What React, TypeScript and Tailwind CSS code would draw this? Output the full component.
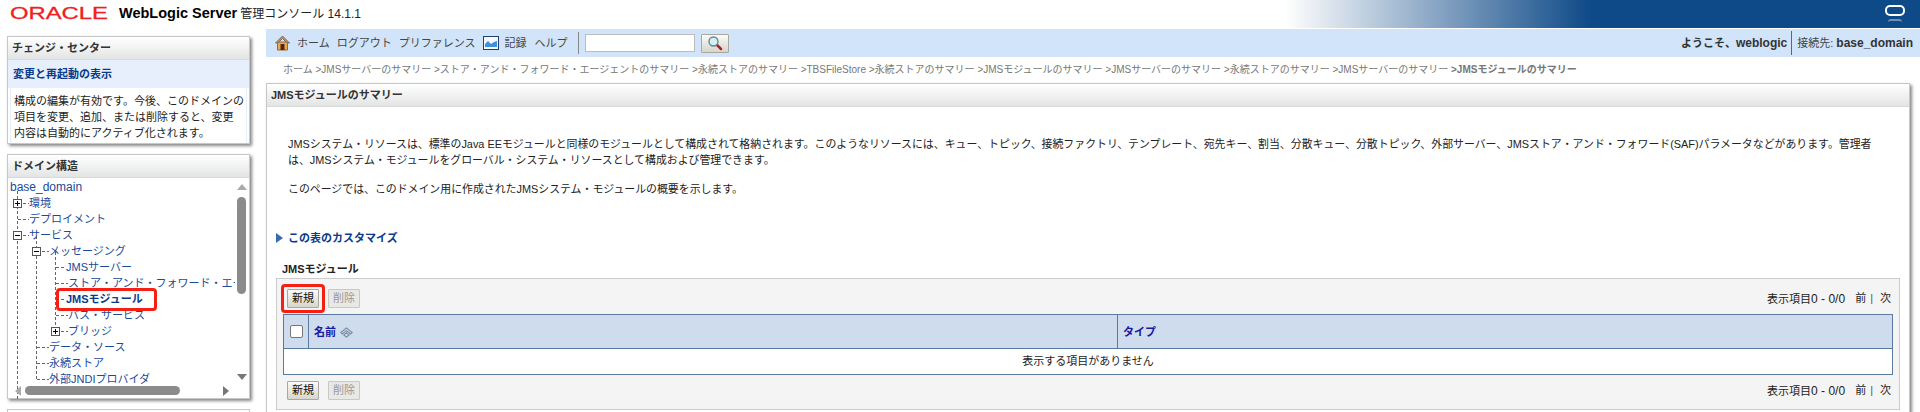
/* eslint-disable */
const FONT = "font-['Liberation_Sans','Noto_Sans_CJK_JP',sans-serif]";

const TREE = [
  { label: "base_domain", left: 2, big: true },
  { label: "環境", left: 21 },
  { label: "デプロイメント", left: 21 },
  { label: "サービス", left: 21 },
  { label: "メッセージング", left: 41 },
  { label: "JMSサーバー", left: 58 },
  { label: "ストア・アンド・フォワード・エージェント", left: 60 },
  { label: "JMSモジュール", left: 58, bold: true },
  { label: "バス・サービス", left: 60 },
  { label: "ブリッジ", left: 60 },
  { label: "データ・ソース", left: 41 },
  { label: "永続ストア", left: 41 },
  { label: "外部JNDIプロバイダ", left: 41 },
];

const CRUMBS = [
  "ホーム",
  "JMSサーバーのサマリー",
  "ストア・アンド・フォワード・エージェントのサマリー",
  "永続ストアのサマリー",
  "TBSFileStore",
  "永続ストアのサマリー",
  "JMSモジュールのサマリー",
  "JMSサーバーのサマリー",
  "永続ストアのサマリー",
  "JMSサーバーのサマリー",
];

function PanelHeader({ children }: { children: React.ReactNode }) {
  return (
    <div className="h-[23px] flex items-center px-[4px] text-[11px] font-bold text-[#333] bg-gradient-to-b from-white to-[#e3e5e4] border-b border-[#d9d9d9]">
      {children}
    </div>
  );
}

function HomeIcon() {
  return (
    <svg width="15" height="16" viewBox="0 0 15 16">
      <path d="M2.5 7 V15 H12.5 V7 Z" fill="#f5a64a" stroke="#8a6a4a" />
      <path d="M7.5 1 L14.5 8 H12 L7.5 3.5 L3 8 H.5 Z" fill="#e8842a" stroke="#77706a" strokeLinejoin="round" />
      <rect x="5.5" y="9" width="4" height="6" fill="#4a2a10" />
    </svg>
  );
}

function ChartIcon() {
  return (
    <svg width="16" height="14" viewBox="0 0 16 14">
      <rect x=".5" y=".5" width="15" height="13" fill="#f4f8fc" stroke="#1f3f70" />
      <path d="M2 11 L2 8 L5 5 L8 8 L11 6 L14 5 L14 11 Z" fill="#3f8fe0" />
    </svg>
  );
}

function SearchIcon() {
  return (
    <svg width="16" height="16" viewBox="0 0 16 16">
      <path d="M9.5 9.5 L14 14" stroke="#b02020" strokeWidth="2.5" strokeLinecap="round" />
      <circle cx="6.5" cy="6.5" r="4.5" fill="#d8eef5" stroke="#5a8a9a" strokeWidth="1.4" />
    </svg>
  );
}

function SortIcon() {
  return (
    <svg width="13" height="11" viewBox="0 0 13 11" fill="none" stroke="#7d8ea6" strokeWidth="1.1">
      <path d="M.8 5.5 L6.5 1 L12.2 5.5 L10.8 7 L6.5 3.6 L2.2 7 Z" />
      <path d="M3.8 8 L6.5 5.8 L9.2 8 L6.5 10 Z" />
    </svg>
  );
}

function Expander({ open }: { open: boolean }) {
  return (
    <svg className="block" width="9" height="9" viewBox="0 0 9 9">
      <rect x=".5" y=".5" width="8" height="8" fill="#fff" stroke="#555" />
      <path d={open ? "M2 4.5 H7" : "M2 4.5 H7 M4.5 2 V7"} stroke="#000" />
    </svg>
  );
}

function TreeLines() {
  return (
    <svg className="absolute left-0 top-0" width="228" height="221" fill="none" stroke="#666" strokeWidth="1" strokeDasharray="3 2">
      <path d="M9.5 13 V221" />
      <path d="M10 25.5 H21 M10 41.5 H21 M10 57.5 H21" />
      <path d="M28.5 58 V201 M29 73.5 H41 M29 169.5 H41 M29 185.5 H41 M29 201.5 H41" />
      <path d="M47.5 74 V153 M48 89.5 H58 M48 105.5 H60 M48 121.5 H58 M48 137.5 H60 M48 153.5 H60" />
    </svg>
  );
}

function Buttons() {
  return (
    <div className="flex gap-[9px]">
      <button className="w-[32px] h-[19px] text-[11px] text-[#111] bg-gradient-to-b from-[#fbfbf8] to-[#d6d6ce] border border-[#a8a8a0] rounded-[1px]">新規</button>
      <button className="w-[32px] h-[19px] text-[11px] text-[#999] bg-[#e8e8e4] border border-[#c8c8c4] rounded-[1px]">削除</button>
    </div>
  );
}

function Pager() {
  return (
    <div className="h-[19px] text-[11px] text-[#222] flex items-center">
      <span>表示項目<span className="text-[12px]">0 - 0/0</span></span>
      <span className="ml-[10px]">前</span>
      <span className="ml-[4px] mr-[7px] text-[#555]">|</span>
      <span>次</span>
    </div>
  );
}

export default function App() {
  return (
    <div className={`relative w-[1920px] h-[412px] overflow-hidden bg-white ${FONT}`}>
      {/* top banner */}
      <div className="h-[28px] mb-[1px] flex items-start justify-between bg-[linear-gradient(90deg,#fff_1285px,#0f4a88_1590px)]">
        <div className="flex items-center h-[28px] pl-[10px]">
          <span className="block w-[99px] h-[28px] leading-[28px] text-[17px] text-[#f02020] origin-left scale-x-[1.4] [-webkit-text-stroke:0.3px_#f02020]">ORACLE</span>
          <span className="ml-[10px] text-[14.5px] font-bold text-black">WebLogic Server</span>
          <span className="ml-[3px] text-[12px] text-[#222]">管理コンソール 14.1.1</span>
        </div>
        <div className="mr-[15px] pt-[5px] flex flex-col items-center gap-[3px]">
          <div className="w-[20px] h-[11px] rounded-[5px] border-2 border-white" />
          <div className="w-[14px] h-[3px] rounded-t-[3px] border-t-2 border-white/40" />
        </div>
      </div>

      <div className="flex">
        {/* left column */}
        <div className="w-[266px] shrink-0 pt-[7px] pl-[7px]">
          <div className="w-[243px] h-[108px] bg-white border border-[#c4c8c8] shadow-[2px_2px_3px_#888]">
            <PanelHeader>チェンジ・センター</PanelHeader>
            <div className="h-[28px] flex items-center px-[5px] bg-[#e6effb] text-[11px] font-bold text-[#0a3a8a]">変更と再起動の表示</div>
            <div className="h-[55px] mx-[2px] px-[3px] pt-[5px] text-[11px] leading-[16px] text-[#222] border-x border-[#e6effb] whitespace-nowrap">
              構成の編集が有効です。今後、このドメインの<br />
              項目を変更、追加、または削除すると、変更<br />
              内容は自動的にアクティブ化されます。
            </div>
          </div>
          <div className="mt-[10px] w-[243px] h-[245px] bg-white border border-[#c4c8c8] shadow-[2px_2px_3px_#888]">
            <PanelHeader>ドメイン構造</PanelHeader>
            <div className="relative h-[221px] overflow-hidden">
              <TreeLines />
              <div className="relative pt-[1px]">
                {TREE.map((t, i) => (
                  <div
                    key={i}
                    style={{ paddingLeft: t.left }}
                    className={`h-[16px] leading-[16px] whitespace-nowrap w-[227px] overflow-hidden ${t.big ? "text-[12px]" : "text-[11px]"} ${t.bold ? "font-bold text-[#0a3a8a]" : "text-[#1a4a9a]"}`}
                  >
                    {t.label}
                  </div>
                ))}
              </div>
              <div className="absolute left-[5px] top-[21px]"><Expander open={false} /></div>
              <div className="absolute left-[5px] top-[53px]"><Expander open /></div>
              <div className="absolute left-[24px] top-[69px]"><Expander open /></div>
              <div className="absolute left-[43px] top-[149px]"><Expander open={false} /></div>
              {/* scrollbars */}
              <div className="absolute left-[229px] top-[6px] w-0 h-0 border-x-[5px] border-x-transparent border-b-[6px] border-b-[#aaa]" />
              <div className="absolute left-[229px] top-[19px] w-[9px] h-[97px] rounded-[5px] bg-[#8b8b8b]" />
              <div className="absolute left-[229px] top-[196px] w-0 h-0 border-x-[5px] border-x-transparent border-t-[6px] border-t-[#777]" />
              <div className="absolute left-[7px] top-[208px] w-0 h-0 border-y-[5px] border-y-transparent border-r-[6px] border-r-[#aaa]" />
              <div className="absolute left-[17px] top-[208px] w-[155px] h-[9px] rounded-[5px] bg-[#8b8b8b]" />
              <div className="absolute left-[215px] top-[208px] w-0 h-0 border-y-[5px] border-y-transparent border-l-[6px] border-l-[#777]" />
            </div>
          </div>
          <div className="mt-[10px] w-[243px] h-[20px] bg-white border border-[#c4c8c8]" />
        </div>

        {/* main */}
        <div className="flex-1 min-w-0">
          <div className="h-[28px] flex items-center justify-between bg-[#d2e4f9] text-[11px] text-[#444]">
            <div className="flex items-center">
              <div className="ml-[9px]"><HomeIcon /></div>
              <span className="ml-[7px]">ホーム</span>
              <span className="ml-[7px]">ログアウト</span>
              <span className="ml-[7px]">プリファレンス</span>
              <div className="ml-[8px]"><ChartIcon /></div>
              <span className="ml-[5px]">記録</span>
              <span className="ml-[8px]">ヘルプ</span>
              <div className="ml-[11px] w-px h-[22px] bg-[#888]" />
              <input className="ml-[6px] w-[110px] h-[18px] bg-white border border-[#bbb]" />
              <button className="ml-[6px] w-[28px] h-[19px] flex items-center justify-center bg-gradient-to-b from-[#fbfbf8] to-[#d6d6ce] border border-[#a8a8a0] rounded-[1px]"><SearchIcon /></button>
            </div>
            <div className="flex items-center mr-[7px]">
              <span className="font-bold text-[#333]">ようこそ、<span className="text-[12px]">weblogic</span></span>
              <div className="ml-[4px] mr-[5px] w-px h-[24px] bg-[#666]" />
              <span>接続先:</span>
              <span className="ml-[3px] text-[12px] font-bold text-[#333]">base_domain</span>
            </div>
          </div>

          <div className="h-[26px] leading-[26px] pl-[17px] text-[10px] text-[#777] whitespace-nowrap">
            {CRUMBS.map((c, i) => (
              <span key={i}>{i > 0 && " >"}{c}</span>
            ))}
            <span className="font-bold"> &gt;JMSモジュールのサマリー</span>
          </div>

          <div className="w-[1644px] h-[340px] bg-white border border-[#c4c8c8] shadow-[2px_2px_3px_#888]">
            <PanelHeader>JMSモジュールのサマリー</PanelHeader>
            <div className="pl-[21px] pt-[29px] text-[10.9px] leading-[16px] text-[#222] whitespace-nowrap">
              <p>JMSシステム・リソースは、標準のJava EEモジュールと同様のモジュールとして構成されて格納されます。このようなリソースには、キュー、トピック、接続ファクトリ、テンプレート、宛先キー、割当、分散キュー、分散トピック、外部サーバー、JMSストア・アンド・フォワード(SAF)パラメータなどがあります。管理者<br />は、JMSシステム・モジュールをグローバル・システム・リソースとして構成および管理できます。</p>
              <p className="mt-[13px]">このページでは、このドメイン用に作成されたJMSシステム・モジュールの概要を示します。</p>
            </div>
            <div className="mt-[33px] ml-[9px] h-[16px] flex items-center text-[11px] font-bold text-[#0a3a8a]">
              <div className="w-0 h-0 mr-[5px] border-y-[5px] border-y-transparent border-l-[7px] border-l-[#3a6ab0]" />
              この表のカスタマイズ
            </div>
            <div className="mt-[15px] ml-[15px] h-[16px] leading-[16px] text-[11px] font-bold text-[#222]">JMSモジュール</div>
            <div className="mt-[1px] ml-[9px] w-[1624px] h-[132px] bg-[#f4f4f4] border border-[#ccc] flex flex-col px-[6px]">
              <div className="flex items-start justify-between pl-[4px] pr-[2px] pt-[10px] h-[35px]">
                <Buttons />
                <Pager />
              </div>
              <div className="h-[61px] bg-white border border-[#5a7a9f]">
                <div className="h-[34px] flex items-stretch bg-[#cfdcee] border-b border-[#5a7a9f] text-[11px] font-bold text-[#1a1aa0]">
                  <div className="w-[25px] flex items-center justify-center border-r border-[#5a7a9f]">
                    <div className="w-[13px] h-[13px] bg-white border border-[#777] rounded-[2px]" />
                  </div>
                  <div className="w-[809px] flex items-center gap-[4px] pl-[5px] pt-[2px] border-r border-[#5a7a9f]">名前 <SortIcon /></div>
                  <div className="flex items-center pl-[5px] pt-[2px]">タイプ</div>
                </div>
                <div className="h-[25px] flex items-center justify-center text-[11px] text-[#222]">表示する項目がありません</div>
              </div>
              <div className="flex items-start justify-between pl-[4px] pr-[2px] pt-[6px]">
                <Buttons />
                <Pager />
              </div>
            </div>
          </div>
        </div>
      </div>

      {/* annotations */}
      <div className="absolute left-[281px] top-[284px] w-[44px] h-[29px] border-[3px] border-[#f51f14] rounded-[4px]" />
      <div className="absolute left-[56px] top-[288px] w-[101px] h-[23px] border-[3px] border-[#f51f14] rounded-[4px]" />
    </div>
  );
}
